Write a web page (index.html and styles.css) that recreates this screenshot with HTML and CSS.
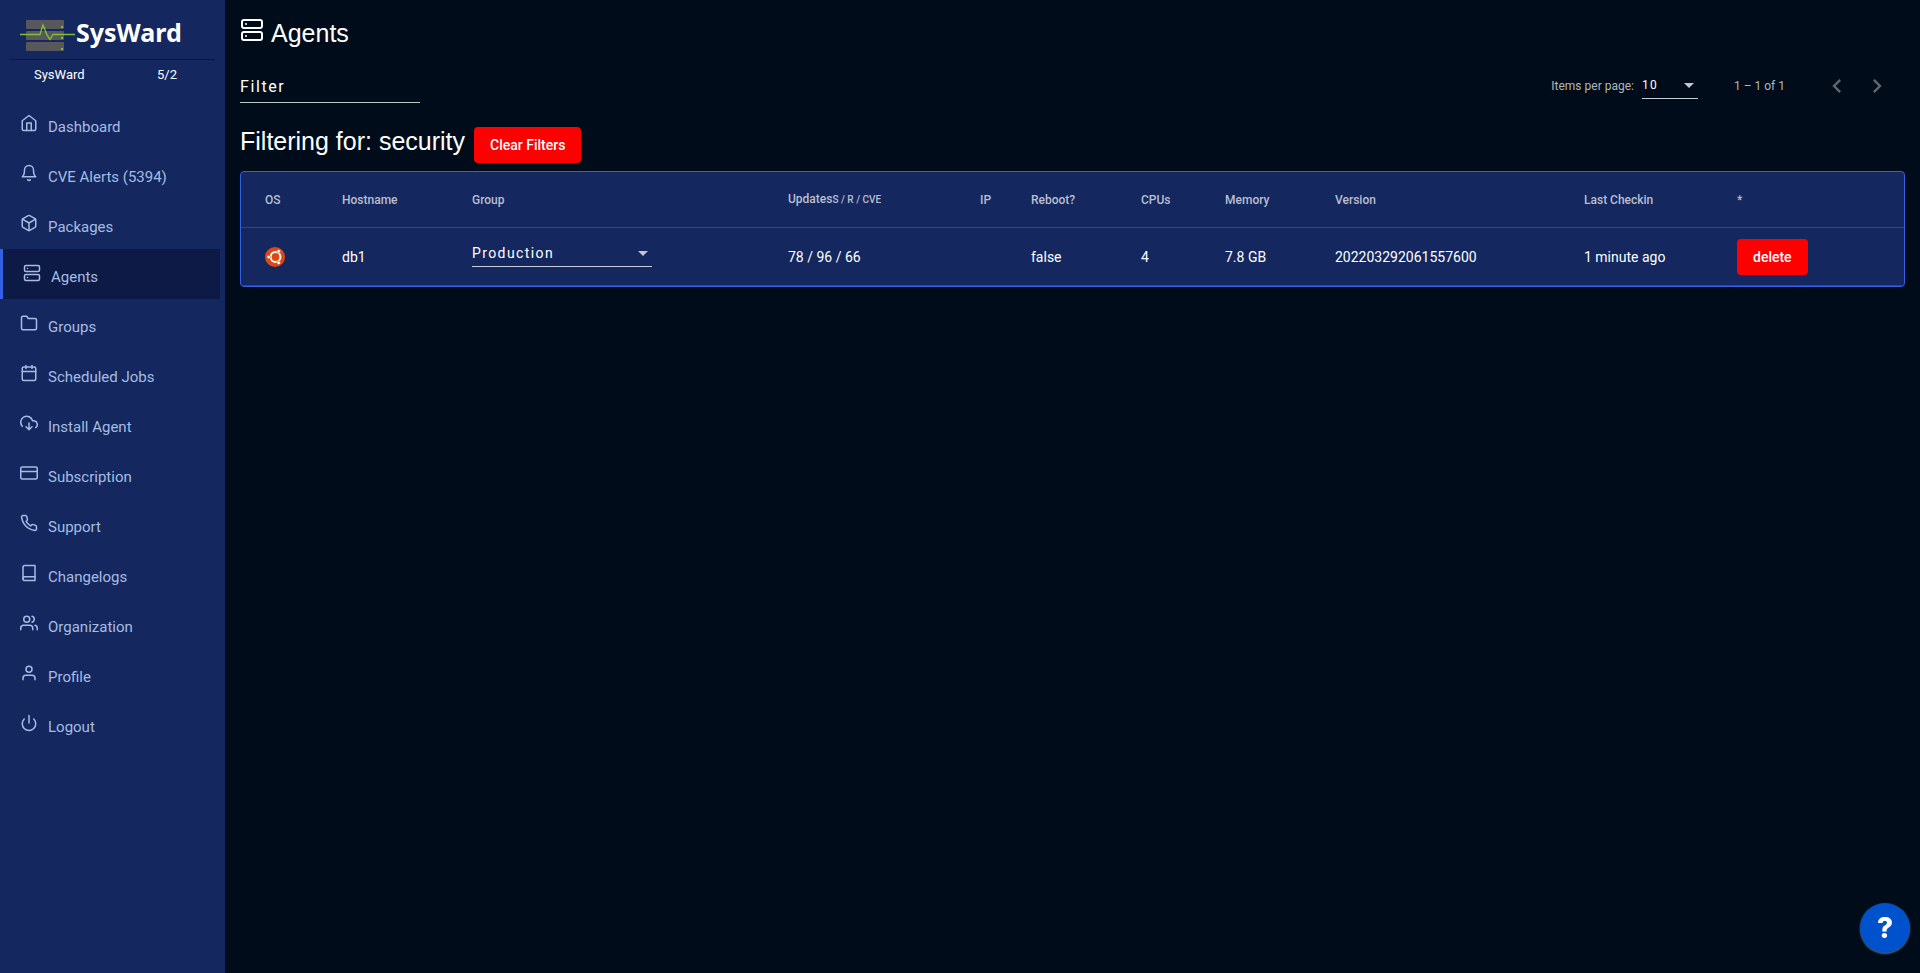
FILE: index.html
```html
<!DOCTYPE html>
<html lang="en">
<head>
<meta charset="utf-8">
<title>SysWard - Agents</title>
<link rel="stylesheet" href="styles.css">
</head>
<body>
<svg class="sprite" aria-hidden="true">
  <symbol id="home" viewBox="0 0 24 24"><path d="M3 9l9-7 9 7v11a2 2 0 0 1-2 2H5a2 2 0 0 1-2-2z"/><path d="M9 22V12h6v10"/></symbol>
  <symbol id="bell" viewBox="0 0 24 24"><path d="M18 8A6 6 0 0 0 6 8c0 7-3 9-3 9h18s-3-2-3-9"/><path d="M13.73 21a2 2 0 0 1-3.46 0"/></symbol>
  <symbol id="package" viewBox="0 0 24 24"><path d="M21 16V8a2 2 0 0 0-1-1.73l-7-4a2 2 0 0 0-2 0l-7 4A2 2 0 0 0 3 8v8a2 2 0 0 0 1 1.73l7 4a2 2 0 0 0 2 0l7-4A2 2 0 0 0 21 16z"/><path d="M3.27 6.96L12 12.01l8.73-5.05M12 22.08V12"/></symbol>
  <symbol id="server" viewBox="0 0 24 24"><rect x="2" y="2" width="20" height="8" rx="2"/><rect x="2" y="14" width="20" height="8" rx="2"/><path d="M6 6h.01M6 18h.01"/></symbol>
  <symbol id="folder" viewBox="0 0 24 24"><path d="M22 19a2 2 0 0 1-2 2H4a2 2 0 0 1-2-2V5a2 2 0 0 1 2-2h5l2 3h9a2 2 0 0 1 2 2z"/></symbol>
  <symbol id="calendar" viewBox="0 0 24 24"><rect x="3" y="4" width="18" height="18" rx="2"/><path d="M16 2v4M8 2v4M3 10h18"/></symbol>
  <symbol id="download" viewBox="0 0 24 24"><path d="M8 17l4 4 4-4M12 12v9"/><path d="M20.88 18.09A5 5 0 0 0 18 9h-1.26A8 8 0 1 0 3 16.29"/></symbol>
  <symbol id="card" viewBox="0 0 24 24"><rect x="1" y="4" width="22" height="16" rx="2"/><path d="M1 10h22"/></symbol>
  <symbol id="phone" viewBox="0 0 24 24"><path d="M22 16.92v3a2 2 0 0 1-2.18 2 19.79 19.79 0 0 1-8.63-3.07 19.5 19.5 0 0 1-6-6 19.79 19.79 0 0 1-3.07-8.67A2 2 0 0 1 4.11 2h3a2 2 0 0 1 2 1.72 12.84 12.84 0 0 0 .7 2.81 2 2 0 0 1-.45 2.11L8.09 9.91a16 16 0 0 0 6 6l1.27-1.27a2 2 0 0 1 2.11-.45 12.84 12.84 0 0 0 2.81.7A2 2 0 0 1 22 16.92z"/></symbol>
  <symbol id="book" viewBox="0 0 24 24"><path d="M4 19.5A2.5 2.5 0 0 1 6.5 17H20"/><path d="M6.5 2H20v20H6.5A2.5 2.5 0 0 1 4 19.5v-15A2.5 2.5 0 0 1 6.5 2z"/></symbol>
  <symbol id="users" viewBox="0 0 24 24"><path d="M17 21v-2a4 4 0 0 0-4-4H5a4 4 0 0 0-4 4v2"/><circle cx="9" cy="7" r="4"/><path d="M23 21v-2a4 4 0 0 0-3-3.87M16 3.13a4 4 0 0 1 0 7.75"/></symbol>
  <symbol id="user" viewBox="0 0 24 24"><path d="M20 21v-2a4 4 0 0 0-4-4H8a4 4 0 0 0-4 4v2"/><circle cx="12" cy="7" r="4"/></symbol>
  <symbol id="power" viewBox="0 0 24 24"><path d="M18.36 6.64a9 9 0 1 1-12.73 0M12 2v10"/></symbol>
</svg>
<div class="layout">
  <aside class="sidebar">
    <div class="brand">
      <svg class="brand-mark" viewBox="0 0 56 32" aria-hidden="true">
        <g fill="#58585c"><rect x="6" y="0" width="38" height="9" rx="1"/><rect x="6" y="11" width="38" height="9" rx="1"/><rect x="6" y="22" width="38" height="9" rx="1"/></g>
        <path d="M0 14.5H20L23 5l4 10 3 4.500 3-5H55" fill="none" stroke="#7fbf35" stroke-width="1.4"/>
        <g fill="#7fbf35"><rect x="41" y="6" width="2" height="2"/><rect x="41" y="17" width="2" height="2"/><rect x="41" y="28" width="2" height="2"/></g>
      </svg>
      <span class="brand-name">SysWard</span>
    </div>
    <div class="account"><span>SysWard</span><span>5/2</span></div>
    <nav class="menu">
      <a href="#"><svg class="icon"><use href="#home"/></svg>Dashboard</a>
      <a href="#"><svg class="icon"><use href="#bell"/></svg>CVE Alerts (5394)</a>
      <a href="#"><svg class="icon"><use href="#package"/></svg>Packages</a>
      <a href="#" class="active" aria-current="page"><svg class="icon"><use href="#server"/></svg>Agents</a>
      <a href="#"><svg class="icon"><use href="#folder"/></svg>Groups</a>
      <a href="#"><svg class="icon"><use href="#calendar"/></svg>Scheduled Jobs</a>
      <a href="#"><svg class="icon"><use href="#download"/></svg>Install Agent</a>
      <a href="#"><svg class="icon"><use href="#card"/></svg>Subscription</a>
      <a href="#"><svg class="icon"><use href="#phone"/></svg>Support</a>
      <a href="#"><svg class="icon"><use href="#book"/></svg>Changelogs</a>
      <a href="#"><svg class="icon"><use href="#users"/></svg>Organization</a>
      <a href="#"><svg class="icon"><use href="#user"/></svg>Profile</a>
      <a href="#"><svg class="icon"><use href="#power"/></svg>Logout</a>
    </nav>
  </aside>
  <main class="content">
    <h1 class="title"><svg class="icon icon-title" aria-hidden="true"><use href="#server"/></svg>Agents</h1>
    <div class="toolbar">
      <input class="filter" type="text" placeholder="Filter" aria-label="Filter">
      <div class="paginator">
        <label for="page-size">Items per page:</label>
        <span class="select select-small"><select id="page-size"><option>10</option></select></span>
        <span class="range">1 – 1 of 1</span>
        <div class="pager">
          <button type="button" aria-label="Previous page"><svg viewBox="0 0 24 24"><path d="M15.41 7.41L14 6l-6 6 6 6 1.41-1.41L10.83 12z"/></svg></button>
          <button type="button" aria-label="Next page"><svg viewBox="0 0 24 24"><path d="M10 6L8.59 7.41 13.17 12l-4.58 4.59L10 18l6-6z"/></svg></button>
        </div>
      </div>
    </div>
    <div class="filter-state">
      <h2 class="subtitle">Filtering for: security</h2>
      <button type="button" class="button">Clear Filters</button>
    </div>
    <div class="card">
      <table class="agents">
        <colgroup><col class="c-os"><col class="c-host"><col class="c-group"><col class="c-updates"><col class="c-ip"><col class="c-reboot"><col class="c-cpus"><col class="c-memory"><col class="c-version"><col class="c-checkin"><col class="c-actions"></colgroup>
        <thead>
          <tr><th>OS</th><th>Hostname</th><th>Group</th><th>Updates<small>S / R / CVE</small></th><th>IP</th><th>Reboot?</th><th>CPUs</th><th>Memory</th><th>Version</th><th>Last Checkin</th><th>*</th></tr>
        </thead>
        <tbody>
          <tr>
            <td><svg class="os" viewBox="0 0 20 20" role="img" aria-label="Ubuntu"><circle cx="10" cy="10" r="10" fill="#dd4814"/><circle cx="10.5" cy="10" r="4.900" fill="none" stroke="#fff" stroke-width="2"/><g stroke="#dd4814" stroke-width=".8"><path d="M5 10H2M13 5.700L14.500 3M13 14.300L14.500 17"/></g><g fill="#fff" stroke="#dd4814" stroke-width=".6"><circle cx="3.700" cy="10" r="1.800"/><circle cx="13.700" cy="4.200" r="1.800"/><circle cx="13.700" cy="15.800" r="1.800"/></g></svg></td>
            <td>db1</td>
            <td><span class="select"><select aria-label="Group"><option>Production</option></select></span></td>
            <td>78 / 96 / 66</td>
            <td></td>
            <td>false</td>
            <td>4</td>
            <td>7.8 GB</td>
            <td>202203292061557600</td>
            <td>1 minute ago</td>
            <td><button type="button" class="button">delete</button></td>
          </tr>
        </tbody>
      </table>
    </div>
  </main>
</div>
<button type="button" class="help" aria-label="Help">?</button>
</body>
</html>
```
FILE: styles.css
```css
* { box-sizing: border-box; }

body {
  margin: 0;
  background: #000c1a;
  color: #fff;
  font: 14px/20px Roboto, sans-serif;
}

button, input, select { font: inherit; color: inherit; }
button { cursor: pointer; }

.sprite { display: none; }

.icon {
  flex: none;
  width: 18px;
  height: 18px;
  fill: none;
  stroke: currentColor;
  stroke-width: 2;
  stroke-linecap: round;
  stroke-linejoin: round;
}

.layout { display: flex; min-height: 100vh; }

/* Sidebar */
.sidebar { flex: none; width: 225px; background: #14275e; }

.brand {
  display: flex;
  align-items: flex-start;
  height: 60px;
  margin: 0 10px;
  padding: 20px 10px 0;
  border-bottom: 1px solid #0c1836;
}
.brand-mark { width: 56px; height: 32px; }
.brand-name { font: bold 25px/24px "Noto Sans", sans-serif; }

.account {
  display: grid;
  grid-template-columns: 123px 1fr;
  padding: 5px 34px 14px;
  font-size: 13px;
}

.menu a {
  display: flex;
  align-items: baseline;
  gap: 10px;
  height: 50px;
  margin-right: 5px;
  padding: 15px 20px 0;
  color: #a5bde3;
  font-size: 15px;
  text-decoration: none;
}
.menu .active { background: #0d1a45; border-left: 3px solid #3460e6; }

/* Content */
.content { flex: 1; min-width: 0; padding: 17px 15px; }

.title, .subtitle {
  margin: 0;
  font: 400 25px/32px "Liberation Sans", Arial, sans-serif;
}
.title { display: flex; align-items: baseline; gap: 7px; }
.icon-title { width: 24px; height: 24px; }

.toolbar {
  display: flex;
  align-items: center;
  justify-content: space-between;
  height: 56px;
  margin-top: 9px;
}
.filter {
  width: 180px;
  height: 34px;
  padding: 1px 0 0;
  border: 0;
  border-bottom: 1px solid #c3c6c9;
  border-radius: 0;
  background: none;
  font-size: 16px;
  letter-spacing: 0.1em;
}
.filter::placeholder { color: #fff; opacity: 1; }

.paginator {
  display: flex;
  align-items: center;
  padding-right: 8px;
  color: #b3b6ba;
  font-size: 12px;
}
.range { margin: 0 32px 0 36px; }
.pager { display: flex; }
.pager button {
  display: grid;
  place-items: center;
  width: 40px;
  height: 40px;
  padding: 0;
  border: 0;
  background: none;
}
.pager svg { width: 28px; height: 28px; fill: #60676f; }

.select { position: relative; display: block; width: 180px; }
.select::after {
  content: "";
  position: absolute;
  top: 10px;
  right: 4px;
  border: 5px solid transparent;
  border-top-color: #c3c6d1;
  border-bottom: 0;
  pointer-events: none;
}
.select select {
  appearance: none;
  display: block;
  width: 100%;
  height: 26px;
  padding: 0 0 1px;
  border: 0;
  border-bottom: 1px solid #c8ccd8;
  border-radius: 0;
  background: none;
  color: #fff;
  letter-spacing: 0.1em;
}
.select-small { width: 56px; margin-left: 8px; }

.filter-state {
  display: flex;
  align-items: baseline;
  gap: 9px;
  margin: 11px 0 8px;
}

.button {
  height: 36px;
  padding: 0 16px;
  border: 0;
  border-radius: 4px;
  background: #f00;
  font-weight: 500;
  white-space: nowrap;
}

.card {
  border: 1px solid #3460e6;
  border-radius: 4px;
  background: #14275e;
  overflow: hidden;
}

.agents { width: 100%; table-layout: fixed; border-collapse: separate; border-spacing: 0; }
.agents th, .agents td {
  padding: 0;
  border-bottom: 1px solid #34467a;
  text-align: left;
  white-space: nowrap;
}
.agents th { height: 56px; color: #b9bfcf; font-size: 12px; font-weight: 500; }
.agents td { height: 58px; }
.agents th:first-child, .agents td:first-child { padding-left: 24px; }
.agents small { font-size: 10px; }
.agents .select { margin-bottom: 6px; }
.os { display: block; width: 20px; height: 20px; }

.c-os { width: 101px; }
.c-host { width: 130px; }
.c-group { width: 316px; }
.c-updates { width: 192px; }
.c-ip { width: 51px; }
.c-reboot { width: 110px; }
.c-cpus { width: 84px; }
.c-memory { width: 110px; }
.c-version { width: 249px; }
.c-checkin { width: 153px; }
.c-actions { width: 167px; }

.help {
  position: fixed;
  right: 10px;
  bottom: 20px;
  width: 50px;
  height: 50px;
  padding: 0;
  border: 0;
  border-radius: 50%;
  background: #0052cc;
  box-shadow: 0 1px 2px #666;
  font: 800 28px/50px Inter, sans-serif;
}
```
